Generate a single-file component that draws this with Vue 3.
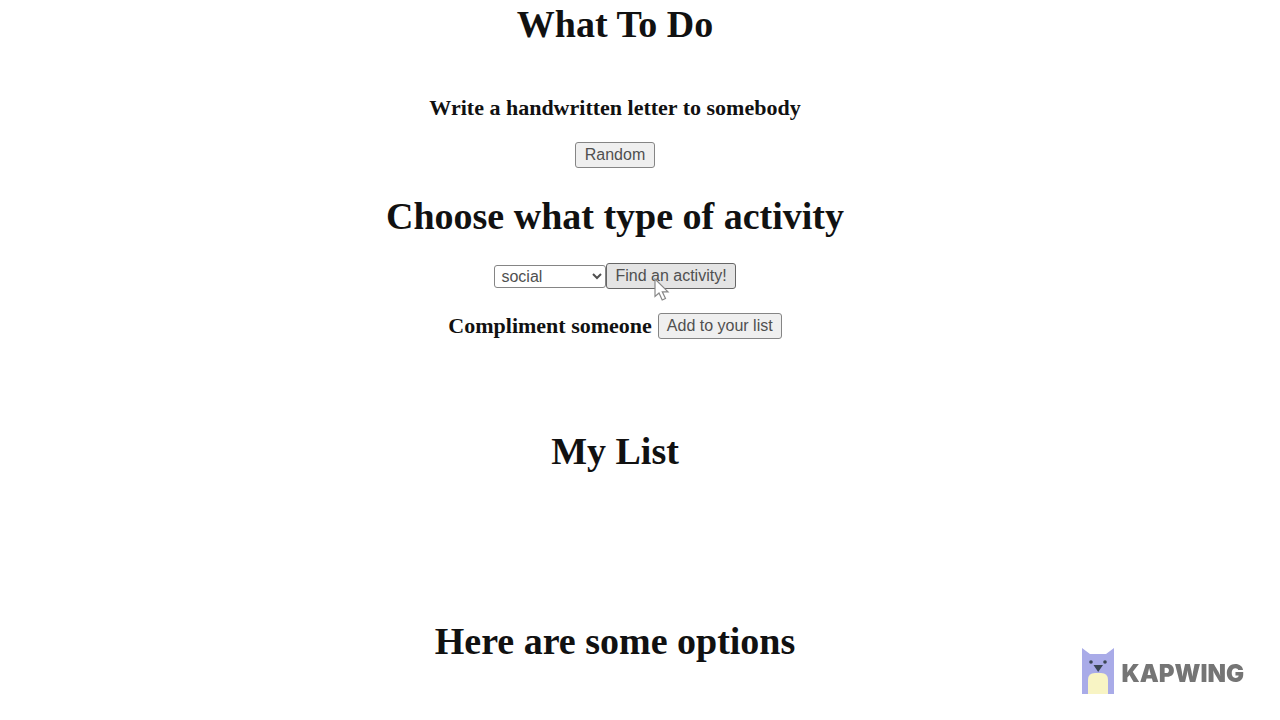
<script setup>
import { ref } from 'vue'

const types = ['education', 'recreational', 'social', 'diy', 'charity', 'cooking', 'relaxation', 'music', 'busywork']
const type = ref('social')
</script>

<template>
  <main class="page">
    <h1>What To Do</h1>
    <section class="random">
      <h3>Write a handwritten letter to somebody</h3>
      <button type="button">Random</button>
    </section>

    <h1>Choose what type of activity</h1>
    <form class="finder" @submit.prevent>
      <select v-model="type" aria-label="Activity type">
        <option v-for="t in types" :key="t" :value="t">{{ t }}</option>
      </select>
      <span class="target">
        <button type="submit" class="hovered">Find an activity!</button>
        <svg class="cursor" width="16" height="24" viewBox="0 0 16 24" aria-hidden="true">
          <path d="M1 1V18.5L5 15L8.2 22L11.5 20.5L8.3 13.8H14Z" fill="#fff" stroke="#888" stroke-width="1.2" />
        </svg>
      </span>
    </form>
    <div class="result">
      <h3>Compliment someone</h3>
      <button type="button">Add to your list</button>
    </div>

    <h1 class="list">My List</h1>
    <h1 class="options">Here are some options</h1>

    <div class="brand">
      <svg width="34" height="48" viewBox="0 0 34 48" aria-hidden="true">
        <path d="M1 1L9 7H25L33 1V47H1Z" fill="#a9abe8" />
        <path d="M7 47V33Q7 26 14 26H20Q27 26 27 33V47Z" fill="#f8f4c4" />
        <circle cx="10" cy="15" r="1.8" fill="#3b4654" />
        <circle cx="24" cy="15" r="1.8" fill="#3b4654" />
        <path d="M12.5 18H22L17.2 25Z" fill="#3b4654" />
      </svg>
      <span class="name">KAPWING</span>
    </div>
  </main>
</template>

<style>
body {
  margin: 0;
  background: #fff;
}
</style>

<style scoped>
.page {
  box-sizing: border-box;
  padding: 2px 50px 0 0;
  color: #111;
  font-family: "Liberation Serif", "Times New Roman", serif;
  text-align: center;
}
h1 {
  margin: 0;
  font-size: 38px;
  line-height: 44px;
}
h3 {
  margin: 0;
  font-size: 22px;
  line-height: 26px;
}
button,
select {
  box-sizing: border-box;
  margin: 0;
  border: 1px solid #858585;
  border-radius: 3px;
  color: #505050;
  font-family: "Liberation Sans", Arial, sans-serif;
  font-size: 16px;
}
button {
  min-width: 80px;
  height: 26px;
  padding: 0 8px;
  background: #efefef;
}
button.hovered {
  border-color: #666;
  background: #e4e4e4;
}
select {
  width: 112px;
  height: 23px;
  padding: 0 0 0 2px;
  background-color: #fff;
}
.random {
  display: flex;
  flex-direction: column;
  align-items: center;
  gap: 21px;
  padding: 49px 0 26px;
}
.finder {
  display: flex;
  align-items: center;
  justify-content: center;
  padding: 25px 0 24px;
}
.target {
  position: relative;
  display: flex;
}
.cursor {
  position: absolute;
  top: 15px;
  left: 48px;
}
.result {
  display: flex;
  align-items: center;
  justify-content: center;
  gap: 6px;
}
.list {
  padding-top: 90px;
}
.options {
  padding-top: 146px;
}
.brand {
  position: fixed;
  right: 36px;
  bottom: 25px;
  display: flex;
  align-items: center;
  gap: 6px;
}
.name {
  padding-top: 6px;
  color: #757575;
  font-family: Inter, sans-serif;
  font-size: 24px;
  font-weight: 900;
  line-height: 32px;
}
</style>
